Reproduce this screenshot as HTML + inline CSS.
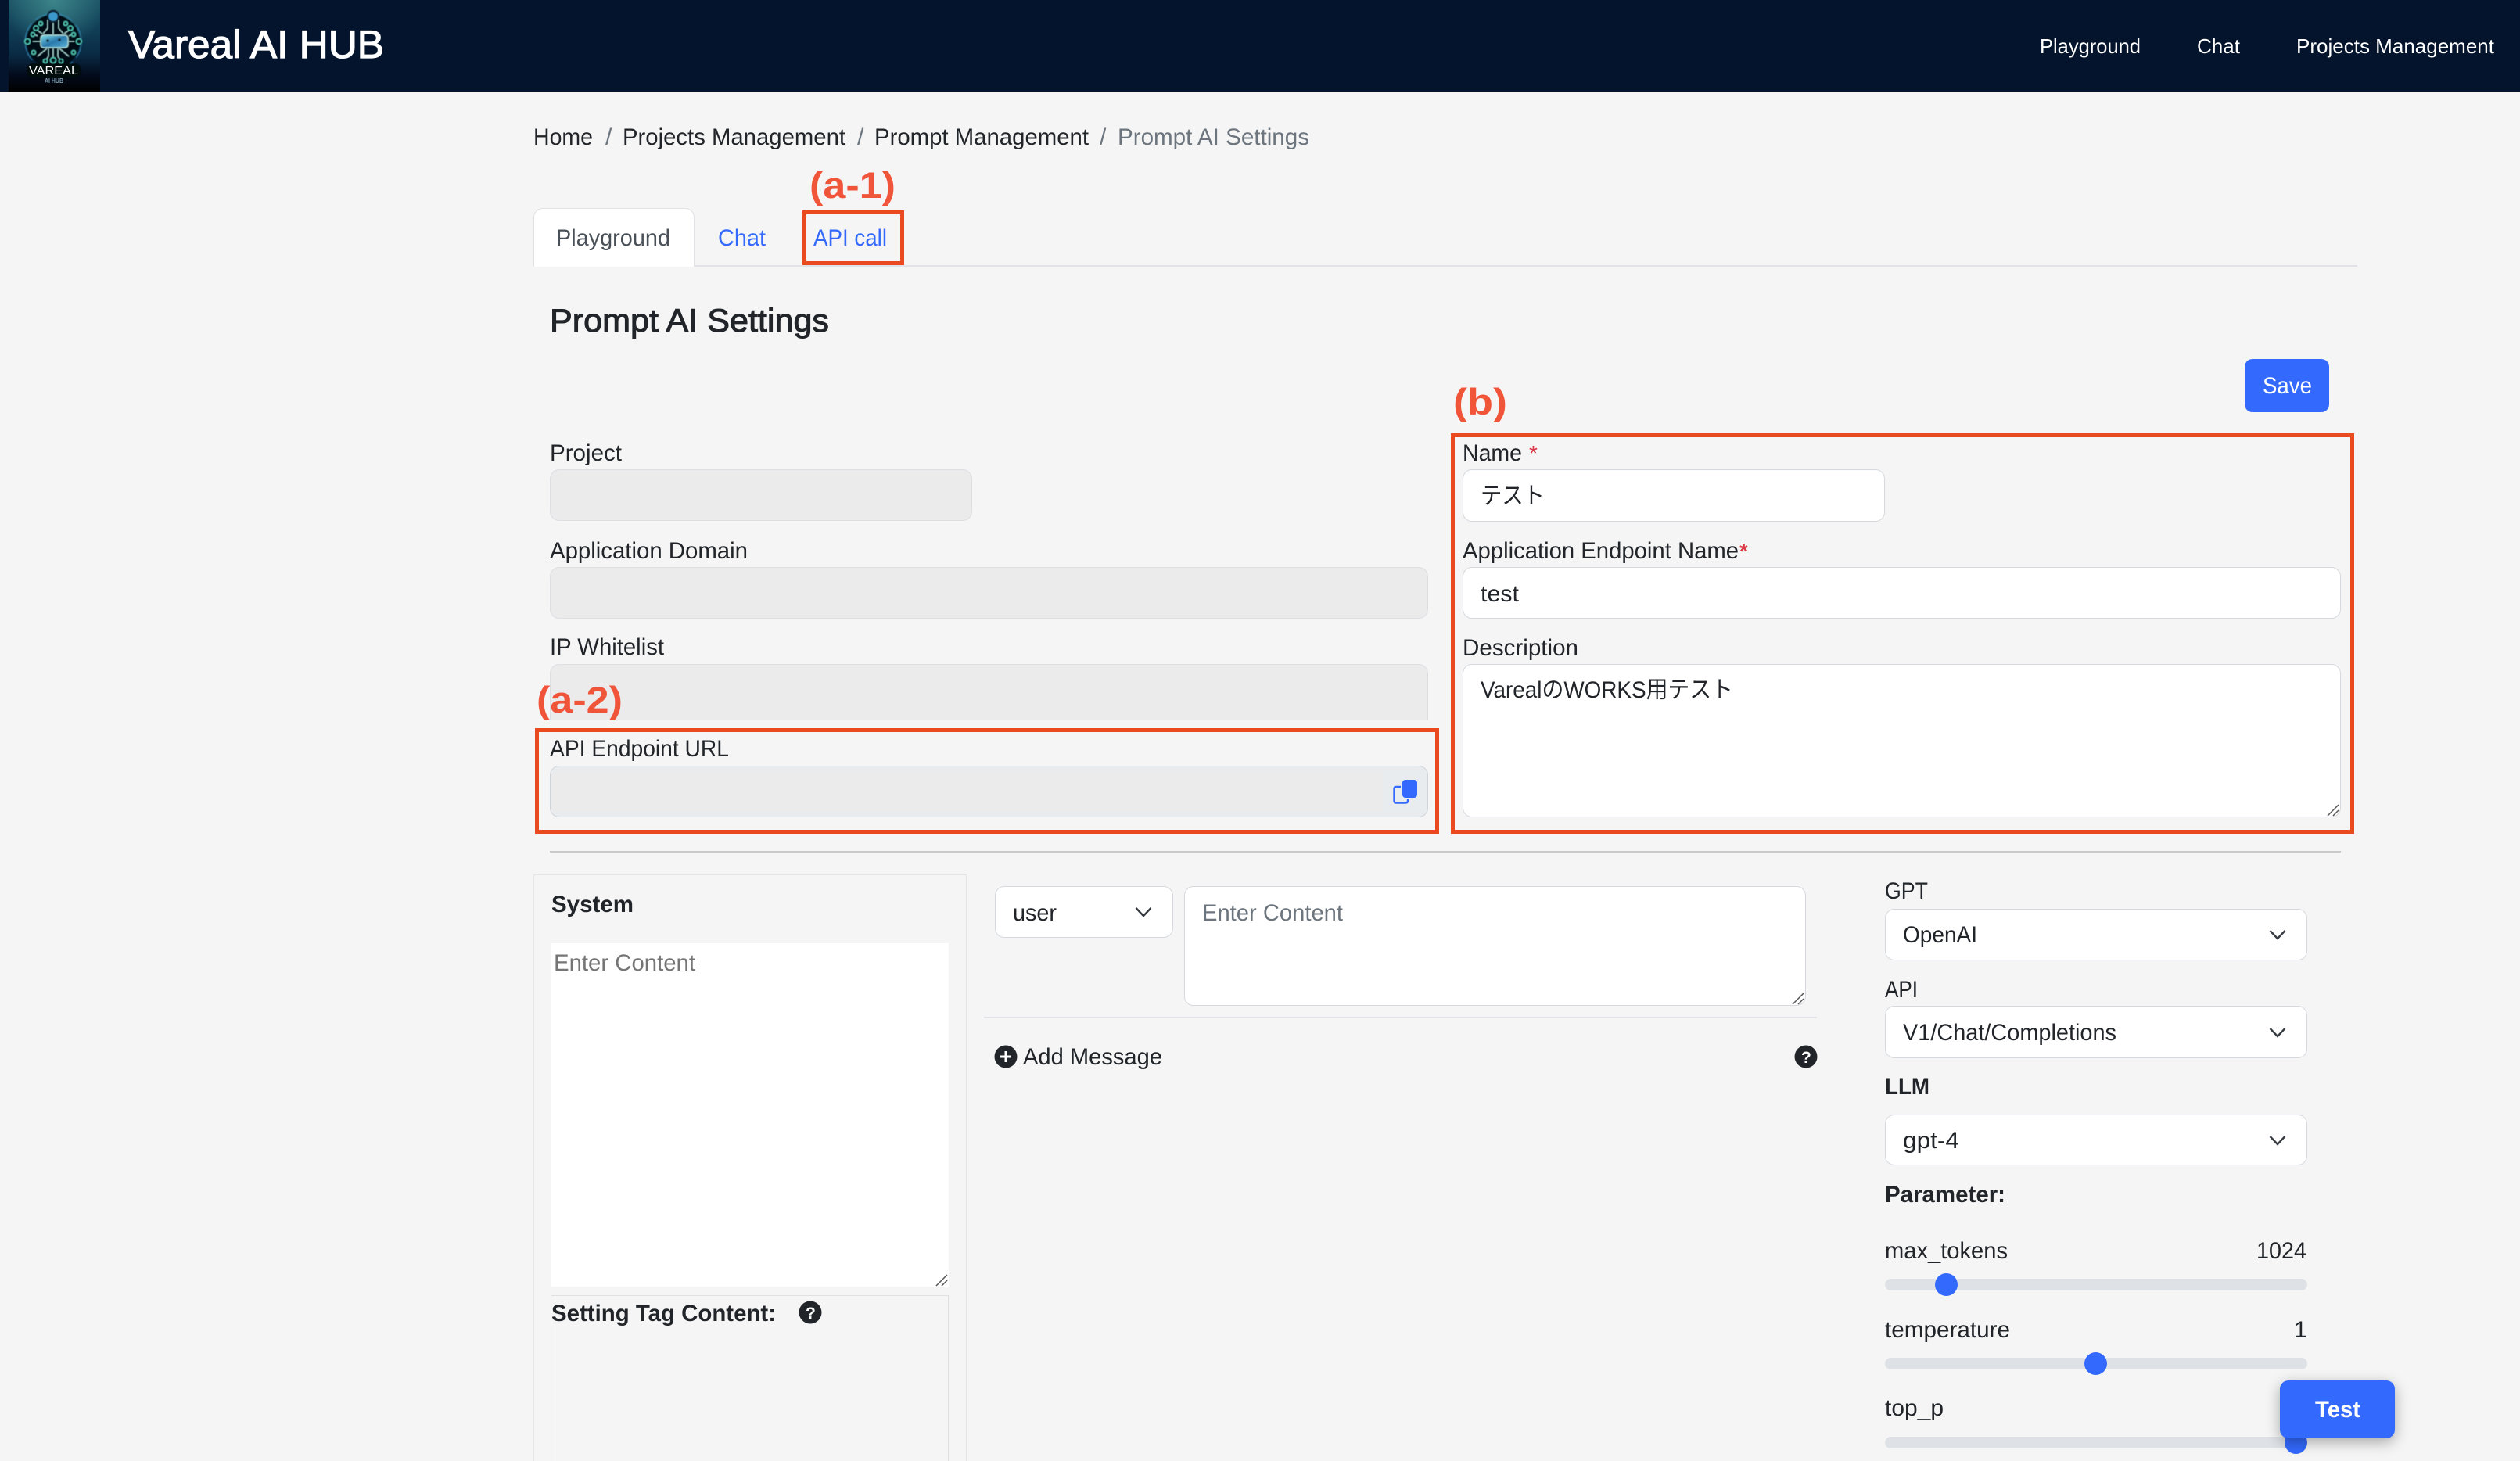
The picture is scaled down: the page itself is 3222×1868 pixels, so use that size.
<!DOCTYPE html>
<html lang="ja">
<head>
<meta charset="utf-8">
<title>Vareal AI HUB</title>
<style>
html,body{margin:0;padding:0;width:3222px;height:1868px;overflow:hidden;background:#f5f5f5}
#root{position:relative;width:3222px;height:1868px;overflow:hidden}
.b{position:absolute;box-sizing:border-box}
.in{border:1.5px solid #d5d8dc;border-radius:12px;background:#fff}
.dis{border:1.5px solid #dcdee2;border-radius:12px;background:#ebebeb}
.red{border:5px solid #e94a20;background:transparent}
.track{background:#dee2e6;border-radius:8px;left:2410px;width:540px;height:15px}
.thumb{background:#3369fd;border-radius:50%;width:29px;height:29px}
svg text{font-family:"Liberation Sans","Noto Sans CJK JP",sans-serif;font-size:30px;fill:#212529}
svg text.ann{font-size:47px;font-weight:bold;fill:#f0553a}
svg text.sb{font-weight:bold}
svg text.w{fill:#fff}
svg text.m{stroke:currentColor}
</style>
</head>
<body>
<div id="root">
<!-- header -->
<div class="b" style="left:0;top:0;width:3222px;height:117px;background:#03142c"></div>

<!-- tabs -->
<div class="b" style="left:682px;top:339px;width:2332px;height:2px;background:#e0e2e6"></div>
<div class="b" style="left:682px;top:266px;width:206px;height:75px;background:#fff;border:1.5px solid #e0e2e6;border-bottom:none;border-radius:12px 12px 0 0"></div>

<!-- left form -->
<div class="b dis" style="left:703px;top:600px;width:540px;height:66px"></div>
<div class="b dis" style="left:703px;top:725px;width:1123px;height:66px"></div>
<div class="b dis" style="left:703px;top:849px;width:1123px;height:72px;border-radius:12px 12px 0 0;border-bottom:none"></div>
<div class="b" style="left:703px;top:979px;width:1123px;height:66px;border:1.5px solid #ced4da;border-radius:12px;background:#e9ecef"></div>
<div class="b" style="left:705px;top:987px;width:1063px;height:51px;background:#ebebeb"></div>

<!-- right form -->
<div class="b in" style="left:1870px;top:600px;width:540px;height:67px"></div>
<div class="b in" style="left:1870px;top:725px;width:1123px;height:66px"></div>
<div class="b in" style="left:1870px;top:849px;width:1123px;height:196px"></div>
<div class="b" style="left:2870px;top:459px;width:108px;height:68px;background:#3369fd;border-radius:10px"></div>

<!-- divider -->
<div class="b" style="left:703px;top:1088px;width:2290px;height:2px;background:#c9c9c9"></div>

<!-- system panel -->
<div class="b" style="left:682px;top:1118px;width:554px;height:750px;border:1.5px solid #e4e4e8;border-bottom:none"></div>
<div class="b" style="left:704px;top:1206px;width:509px;height:439px;background:#fff"></div>
<div class="b" style="left:704px;top:1656px;width:509px;height:212px;border:1.5px solid #e0e0e0;border-bottom:none"></div>

<!-- messages -->
<div class="b in" style="left:1272px;top:1133px;width:228px;height:66px"></div>
<div class="b in" style="left:1514px;top:1133px;width:795px;height:153px"></div>
<div class="b" style="left:1258px;top:1300px;width:1065px;height:2px;background:#e0e2e6"></div>

<!-- right column -->
<div class="b in" style="left:2410px;top:1162px;width:540px;height:66px"></div>
<div class="b in" style="left:2410px;top:1286px;width:540px;height:67px"></div>
<div class="b in" style="left:2410px;top:1425px;width:540px;height:65px"></div>
<div class="b track" style="top:1635px"></div>
<div class="b thumb" style="left:2474px;top:1628px"></div>
<div class="b track" style="top:1736px"></div>
<div class="b thumb" style="left:2665px;top:1729px"></div>
<div class="b track" style="top:1837px"></div>
<div class="b thumb" style="left:2921px;top:1830px"></div>

<!-- annotation frames -->
<div class="b red" style="left:1026px;top:269px;width:130px;height:70px"></div>
<div class="b red" style="left:684px;top:931px;width:1156px;height:135px"></div>
<div class="b red" style="left:1855px;top:554px;width:1155px;height:512px"></div>

<svg class="b" style="left:0;top:0" width="3222" height="1868" viewBox="0 0 3222 1868" xmlns="http://www.w3.org/2000/svg">
<defs>
<linearGradient id="lg" x1="0" y1="0" x2="0" y2="1">
<stop offset="0" stop-color="#1c5466"/><stop offset=".3" stop-color="#114058"/><stop offset=".6" stop-color="#0a2a44"/><stop offset=".82" stop-color="#030b1c"/><stop offset="1" stop-color="#000"/>
</linearGradient>
<radialGradient id="rg" cx=".5" cy="0" r=".55">
<stop offset="0" stop-color="#3f8a8e" stop-opacity=".9"/><stop offset="1" stop-color="#3f8a8e" stop-opacity="0"/>
</radialGradient>
<linearGradient id="gg" x1="0" y1="0" x2="1" y2="1">
<stop offset="0" stop-color="#7fdde6"/><stop offset=".5" stop-color="#2a78ac"/><stop offset="1" stop-color="#5bb6d8"/>
</linearGradient>
<filter id="sf" x="-5%" y="-5%" width="110%" height="110%"><feGaussianBlur stdDeviation=".5"/></filter>
</defs>

<!-- logo -->
<rect x="11" y="0" width="117" height="117" fill="url(#lg)"/>
<rect x="11" y="0" width="117" height="117" fill="url(#rg)"/>
<g filter="url(#sf)">
<circle cx="68" cy="53" r="34" fill="#030c14"/>
<circle cx="68" cy="53" r="36" fill="none" stroke="#2f7fa8" stroke-width="1.200" stroke-dasharray="22 7"/>
<g fill="none" stroke="#a9d8d4" stroke-width="1.200">
<path d="M68 26V44M61 25V36L55 43M75 25V36L81 43M52 53H42M87 53H95M60 62L48 72M76 62L88 72M68 62V78M62 62V72L58 78M74 62V72L78 78M44 36L54 43M92 36L82 43M48 46L40 42M88 46L96 42"/>
</g>
<g fill="#04121c" stroke="#4fc4b2" stroke-width="1.600">
<circle cx="35" cy="53" r="3.500"/><circle cx="101" cy="53" r="3.500"/><circle cx="68" cy="77" r="3.500"/><circle cx="58" cy="78" r="2.500"/><circle cx="78" cy="78" r="2.500"/><circle cx="46" cy="36" r="3"/><circle cx="90" cy="36" r="3"/><circle cx="43" cy="67" r="2.500"/><circle cx="94" cy="67" r="2.500"/><circle cx="52" cy="30" r="2.500"/><circle cx="84" cy="30" r="2.500"/><circle cx="42" cy="44" r="2.500"/><circle cx="94" cy="44" r="2.500"/>
</g>
<circle cx="68" cy="21" r="7" fill="#3b97cc" stroke="#0a2030" stroke-width="2.500"/>
<rect x="52" y="45" width="35" height="16" rx="4" fill="url(#gg)" stroke="#a9d8d4" stroke-width="1.400"/>
<circle cx="61" cy="52" r="1.800" fill="#07202e"/><circle cx="76" cy="51" r="1.800" fill="#07202e"/>
<rect x="34" y="81" width="70" height="19" rx="9" fill="#04070c"/>
</g>
<text x="37" y="95" textLength="63" lengthAdjust="spacingAndGlyphs" class="w" style="font-size:15px">VAREAL</text>
<text x="57" y="106" textLength="24" lengthAdjust="spacingAndGlyphs" class="sb" style="font-size:8px;fill:#7f9fb0">AI HUB</text>

<!-- header text -->
<text x="164" y="74" textLength="327" lengthAdjust="spacingAndGlyphs" class="w m" style="font-size:50px;color:#fff;stroke-width:1.200">Vareal AI HUB</text>
<text x="2608" y="68" textLength="129" lengthAdjust="spacingAndGlyphs" class="w" style="font-size:26px">Playground</text>
<text x="2809" y="68" textLength="55" lengthAdjust="spacingAndGlyphs" class="w" style="font-size:26px">Chat</text>
<text x="2936" y="68" textLength="253" lengthAdjust="spacingAndGlyphs" class="w" style="font-size:26px">Projects Management</text>

<!-- breadcrumb -->
<text x="682" y="185" textLength="76" lengthAdjust="spacingAndGlyphs">Home</text>
<text x="774" y="185" style="fill:#6c757d">/</text>
<text x="796" y="185" textLength="285" lengthAdjust="spacingAndGlyphs">Projects Management</text>
<text x="1096" y="185" style="fill:#6c757d">/</text>
<text x="1118" y="185" textLength="274" lengthAdjust="spacingAndGlyphs">Prompt Management</text>
<text x="1406" y="185" style="fill:#6c757d">/</text>
<text x="1429" y="185" textLength="245" lengthAdjust="spacingAndGlyphs" style="fill:#6c757d">Prompt AI Settings</text>

<!-- annotations -->
<text x="1035" y="253" textLength="110" lengthAdjust="spacingAndGlyphs" class="ann">(a-1)</text>
<text x="686" y="911" textLength="110" lengthAdjust="spacingAndGlyphs" class="ann">(a-2)</text>
<text x="1858" y="530" textLength="69" lengthAdjust="spacingAndGlyphs" class="ann">(b)</text>

<!-- tabs text -->
<text x="711" y="314" textLength="146" lengthAdjust="spacingAndGlyphs" style="fill:#495057">Playground</text>
<text x="918" y="314" textLength="61" lengthAdjust="spacingAndGlyphs" style="fill:#3369fd">Chat</text>
<text x="1040" y="314" textLength="94" lengthAdjust="spacingAndGlyphs" style="fill:#3369fd">API call</text>

<text x="703" y="424" textLength="357" lengthAdjust="spacingAndGlyphs" class="m" style="font-size:42px;color:#212529;stroke-width:1">Prompt AI Settings</text>

<!-- left labels -->
<text x="703" y="589" textLength="92" lengthAdjust="spacingAndGlyphs">Project</text>
<text x="703" y="714" textLength="253" lengthAdjust="spacingAndGlyphs">Application Domain</text>
<text x="703" y="837" textLength="146" lengthAdjust="spacingAndGlyphs">IP Whitelist</text>
<text x="703" y="967" textLength="229" lengthAdjust="spacingAndGlyphs">API Endpoint URL</text>

<!-- copy icon -->
<path d="M1791 1006H1785Q1782.500 1006 1782.500 1009V1024Q1782.500 1026.500 1785 1026.500H1797Q1800 1026.500 1800 1024V1021" fill="none" stroke="#3369fd" stroke-width="2.400"/>
<rect x="1793" y="997" width="19" height="23" rx="4" fill="#3369fd"/>

<!-- right labels -->
<text x="2893" y="503" textLength="63" lengthAdjust="spacingAndGlyphs" class="w">Save</text>
<text x="1870" y="589" textLength="76" lengthAdjust="spacingAndGlyphs">Name</text>
<text x="1955" y="589" style="font-size:28px;fill:#dc3545">*</text>
<text x="1893" y="644" textLength="82" lengthAdjust="spacingAndGlyphs">テスト</text>
<text x="1870" y="714" textLength="353" lengthAdjust="spacingAndGlyphs">Application Endpoint Name</text>
<text x="2224" y="714" class="sb" style="font-size:28px;fill:#dc3545">*</text>
<text x="1893" y="769" textLength="49" lengthAdjust="spacingAndGlyphs">test</text>
<text x="1870" y="838" textLength="148" lengthAdjust="spacingAndGlyphs">Description</text>
<text x="1893" y="892" textLength="323" lengthAdjust="spacingAndGlyphs">VarealのWORKS用テスト</text>
<path d="M2976 1043L2990 1029M2983 1043L2990 1036" stroke="#555" stroke-width="1.500" fill="none"/>

<!-- system -->
<text x="705" y="1166" textLength="105" lengthAdjust="spacingAndGlyphs" class="sb">System</text>
<text x="708" y="1241" textLength="181" lengthAdjust="spacingAndGlyphs" style="fill:#757575">Enter Content</text>
<path d="M1197 1644L1211 1630M1204 1644L1211 1637" stroke="#555" stroke-width="1.500" fill="none"/>
<text x="705" y="1689" textLength="287" lengthAdjust="spacingAndGlyphs" class="sb">Setting Tag Content:</text>
<circle cx="1036" cy="1678" r="14.500" fill="#212529"/>
<text x="1030" y="1686" class="sb w" style="font-size:21px">?</text>

<!-- messages -->
<text x="1295" y="1177" textLength="56" lengthAdjust="spacingAndGlyphs">user</text>
<path d="M1452.500 1161L1462 1171L1471.500 1161" fill="none" stroke="#343a40" stroke-width="2.400"/>
<text x="1537" y="1177" textLength="180" lengthAdjust="spacingAndGlyphs" style="fill:#6c757d">Enter Content</text>
<path d="M2292 1284L2306 1270M2299 1284L2306 1277" stroke="#555" stroke-width="1.500" fill="none"/>
<circle cx="1286" cy="1351" r="14.500" fill="#212529"/>
<path d="M1286 1344V1358M1279 1351H1293" stroke="#fff" stroke-width="3" fill="none"/>
<text x="1308" y="1361" textLength="178" lengthAdjust="spacingAndGlyphs">Add Message</text>
<circle cx="2309" cy="1351" r="14.500" fill="#212529"/>
<text x="2303" y="1359" class="sb w" style="font-size:21px">?</text>

<!-- right column text -->
<text x="2410" y="1149" textLength="55" lengthAdjust="spacingAndGlyphs">GPT</text>
<text x="2433" y="1205" textLength="95" lengthAdjust="spacingAndGlyphs">OpenAI</text>
<path d="M2902.500 1190L2912 1200L2921.500 1190" fill="none" stroke="#343a40" stroke-width="2.400"/>
<text x="2410" y="1275" textLength="42" lengthAdjust="spacingAndGlyphs">API</text>
<text x="2433" y="1330" textLength="273" lengthAdjust="spacingAndGlyphs">V1/Chat/Completions</text>
<path d="M2902.500 1315L2912 1325L2921.500 1315" fill="none" stroke="#343a40" stroke-width="2.400"/>
<text x="2410" y="1399" textLength="57" lengthAdjust="spacingAndGlyphs" class="sb">LLM</text>
<text x="2433" y="1468" textLength="72" lengthAdjust="spacingAndGlyphs">gpt-4</text>
<path d="M2902.500 1453L2912 1463L2921.500 1453" fill="none" stroke="#343a40" stroke-width="2.400"/>
<text x="2410" y="1537" textLength="154" lengthAdjust="spacingAndGlyphs" class="sb">Parameter:</text>
<text x="2410" y="1609" textLength="157" lengthAdjust="spacingAndGlyphs">max_tokens</text>
<text x="2885" y="1609" textLength="64" lengthAdjust="spacingAndGlyphs">1024</text>
<text x="2410" y="1710" textLength="160" lengthAdjust="spacingAndGlyphs">temperature</text>
<text x="2933" y="1710">1</text>
<text x="2410" y="1810" textLength="75" lengthAdjust="spacingAndGlyphs">top_p</text>
</svg>

<!-- floating test button -->
<div class="b" style="left:2915px;top:1765px;width:147px;height:74px;background:#3369fd;border-radius:11px;box-shadow:0 5px 18px rgba(0,0,0,.32)">
<svg width="147" height="74" viewBox="0 0 147 74" xmlns="http://www.w3.org/2000/svg" style="display:block"><text x="45" y="47" textLength="58" lengthAdjust="spacingAndGlyphs" class="sb w">Test</text></svg>
</div>
</div>
</body>
</html>
